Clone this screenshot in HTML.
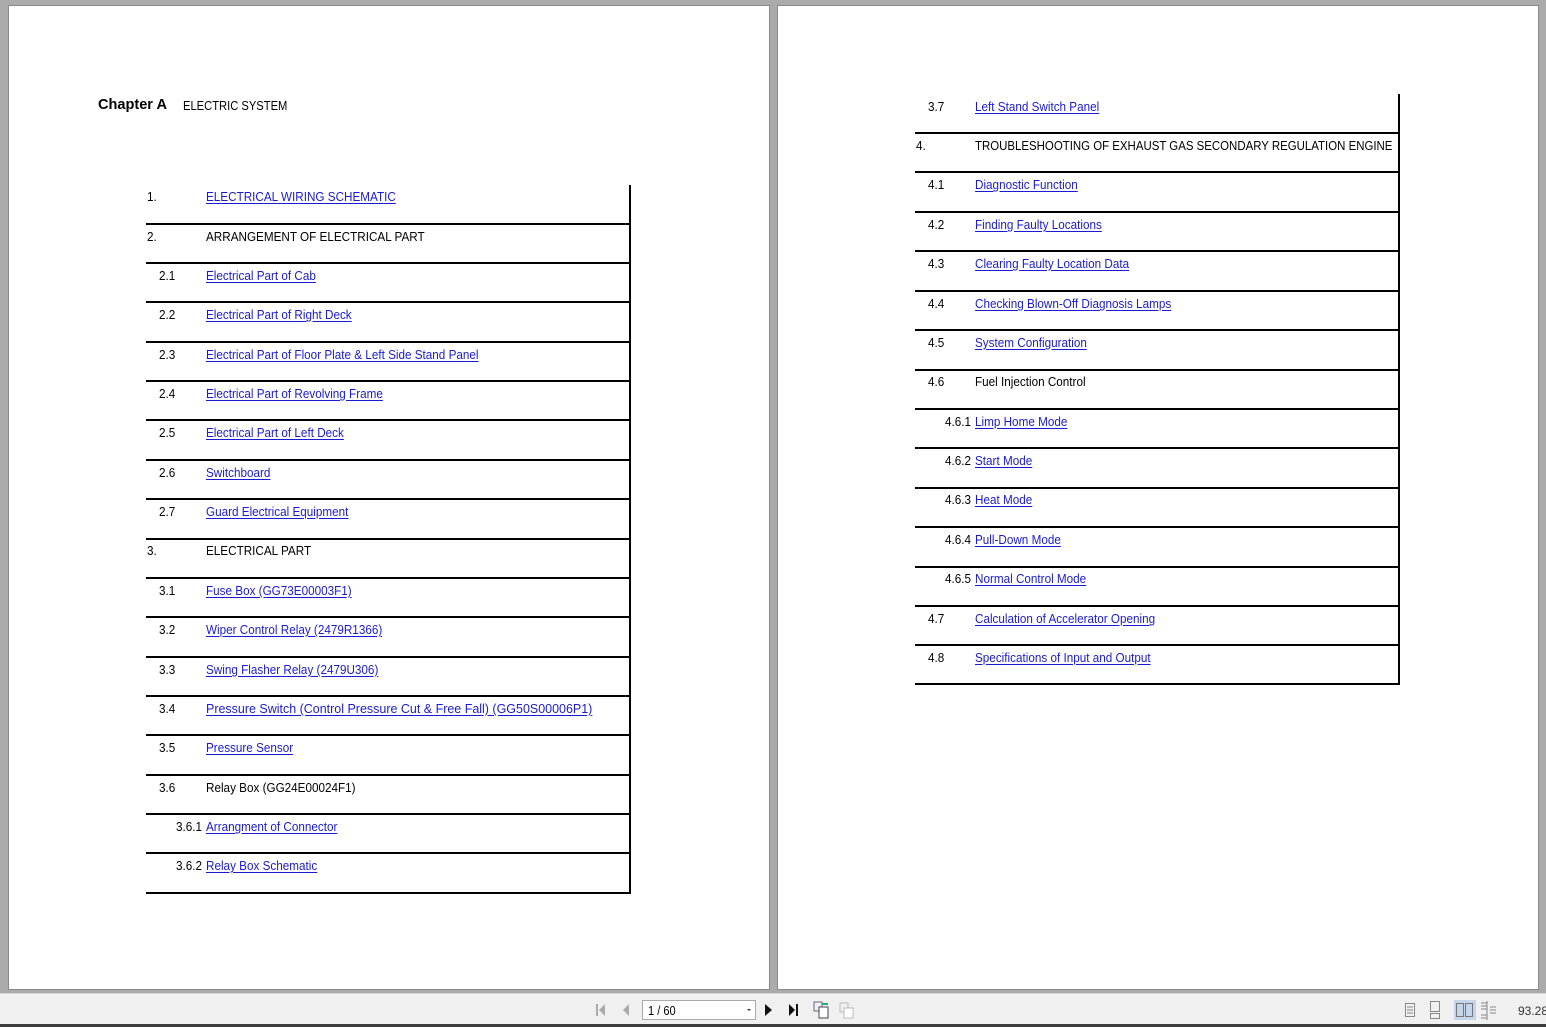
<!DOCTYPE html>
<html><head><meta charset="utf-8"><style>
*{margin:0;padding:0;box-sizing:border-box}
body{width:1546px;height:1027px;background:#ababab;position:relative;overflow:hidden;font-family:"Liberation Sans",sans-serif}
.pg{position:absolute;background:#fff;top:5px;height:985px;border:1px solid #8a8a8a}
.t{position:absolute;font-size:13px;line-height:16px;color:#000;white-space:nowrap;transform:scaleX(.9);transform-origin:0 50%;margin-top:1px}
.a{color:#1a1ad6;text-decoration:underline;text-underline-offset:2px}
.h{position:absolute;height:2px;background:#000}
.v{position:absolute;width:2px;background:#000}
.tb{position:absolute;left:0;top:993px;width:1546px;height:31px;background:#f0f0f0;border-top:1px solid #d8d8d8}
.bot{position:absolute;left:0;top:1024px;width:1546px;height:3px;background:#3c3c3c}
</style></head><body>
<div class="pg" style="left:8px;width:762px"></div>
<div class="pg" style="left:777px;width:762px"></div>

<div class="t" style="left:98px;top:96px;font-weight:bold;font-size:15px;transform:scaleX(.97)">Chapter A</div>
<div class="t" style="left:183px;top:97px;transform:scaleX(.86)">ELECTRIC SYSTEM</div>

<!-- left table -->
<div class="v" style="left:629px;top:185px;height:709px"></div>
<div class="h" style="left:146px;top:223px;width:485px"></div>
<div class="h" style="left:146px;top:262px;width:485px"></div>
<div class="h" style="left:146px;top:301px;width:485px"></div>
<div class="h" style="left:146px;top:341px;width:485px"></div>
<div class="h" style="left:146px;top:380px;width:485px"></div>
<div class="h" style="left:146px;top:419px;width:485px"></div>
<div class="h" style="left:146px;top:459px;width:485px"></div>
<div class="h" style="left:146px;top:498px;width:485px"></div>
<div class="h" style="left:146px;top:538px;width:485px"></div>
<div class="h" style="left:146px;top:577px;width:485px"></div>
<div class="h" style="left:146px;top:616px;width:485px"></div>
<div class="h" style="left:146px;top:656px;width:485px"></div>
<div class="h" style="left:146px;top:695px;width:485px"></div>
<div class="h" style="left:146px;top:734px;width:485px"></div>
<div class="h" style="left:146px;top:774px;width:485px"></div>
<div class="h" style="left:146px;top:813px;width:485px"></div>
<div class="h" style="left:146px;top:852px;width:485px"></div>
<div class="h" style="left:146px;top:892px;width:485px"></div>

<div class="t" style="left:147px;top:188px">1.</div><div class="t a" style="left:206px;top:188px">ELECTRICAL WIRING SCHEMATIC</div>
<div class="t" style="left:147px;top:228px">2.</div><div class="t" style="left:206px;top:228px">ARRANGEMENT OF ELECTRICAL PART</div>
<div class="t" style="left:159px;top:267px">2.1</div><div class="t a" style="left:206px;top:267px">Electrical Part of Cab</div>
<div class="t" style="left:159px;top:306px">2.2</div><div class="t a" style="left:206px;top:306px">Electrical Part of Right Deck</div>
<div class="t" style="left:159px;top:346px">2.3</div><div class="t a" style="left:206px;top:346px">Electrical Part of Floor Plate &amp; Left Side Stand Panel</div>
<div class="t" style="left:159px;top:385px">2.4</div><div class="t a" style="left:206px;top:385px">Electrical Part of Revolving Frame</div>
<div class="t" style="left:159px;top:424px">2.5</div><div class="t a" style="left:206px;top:424px">Electrical Part of Left Deck</div>
<div class="t" style="left:159px;top:464px">2.6</div><div class="t a" style="left:206px;top:464px">Switchboard</div>
<div class="t" style="left:159px;top:503px">2.7</div><div class="t a" style="left:206px;top:503px">Guard Electrical Equipment</div>
<div class="t" style="left:147px;top:542px">3.</div><div class="t" style="left:206px;top:542px">ELECTRICAL PART</div>
<div class="t" style="left:159px;top:582px">3.1</div><div class="t a" style="left:206px;top:582px">Fuse Box (GG73E00003F1)</div>
<div class="t" style="left:159px;top:621px">3.2</div><div class="t a" style="left:206px;top:621px">Wiper Control Relay (2479R1366)</div>
<div class="t" style="left:159px;top:661px">3.3</div><div class="t a" style="left:206px;top:661px">Swing Flasher Relay (2479U306)</div>
<div class="t" style="left:159px;top:700px">3.4</div><div class="t a" style="left:206px;top:700px;transform:scaleX(.96)">Pressure Switch (Control Pressure Cut &amp; Free Fall) (GG50S00006P1)</div>
<div class="t" style="left:159px;top:739px">3.5</div><div class="t a" style="left:206px;top:739px">Pressure Sensor</div>
<div class="t" style="left:159px;top:779px">3.6</div><div class="t" style="left:206px;top:779px">Relay Box (GG24E00024F1)</div>
<div class="t" style="left:176px;top:818px">3.6.1</div><div class="t a" style="left:206px;top:818px">Arrangment of Connector</div>
<div class="t" style="left:176px;top:857px">3.6.2</div><div class="t a" style="left:206px;top:857px">Relay Box Schematic</div>

<!-- right table -->
<div class="v" style="left:1398px;top:94px;height:591px"></div>
<div class="h" style="left:915px;top:132px;width:485px"></div>
<div class="h" style="left:915px;top:171px;width:485px"></div>
<div class="h" style="left:915px;top:211px;width:485px"></div>
<div class="h" style="left:915px;top:250px;width:485px"></div>
<div class="h" style="left:915px;top:290px;width:485px"></div>
<div class="h" style="left:915px;top:329px;width:485px"></div>
<div class="h" style="left:915px;top:369px;width:485px"></div>
<div class="h" style="left:915px;top:408px;width:485px"></div>
<div class="h" style="left:915px;top:447px;width:485px"></div>
<div class="h" style="left:915px;top:487px;width:485px"></div>
<div class="h" style="left:915px;top:526px;width:485px"></div>
<div class="h" style="left:915px;top:566px;width:485px"></div>
<div class="h" style="left:915px;top:605px;width:485px"></div>
<div class="h" style="left:915px;top:644px;width:485px"></div>
<div class="h" style="left:915px;top:683px;width:485px"></div>

<div class="t" style="left:928px;top:98px">3.7</div><div class="t a" style="left:975px;top:98px">Left Stand Switch Panel</div>
<div class="t" style="left:916px;top:137px">4.</div><div class="t" style="left:975px;top:137px;transform:scaleX(.88)">TROUBLESHOOTING OF EXHAUST GAS SECONDARY REGULATION ENGINE</div>
<div class="t" style="left:928px;top:176px">4.1</div><div class="t a" style="left:975px;top:176px">Diagnostic Function</div>
<div class="t" style="left:928px;top:216px">4.2</div><div class="t a" style="left:975px;top:216px">Finding Faulty Locations</div>
<div class="t" style="left:928px;top:255px">4.3</div><div class="t a" style="left:975px;top:255px">Clearing Faulty Location Data</div>
<div class="t" style="left:928px;top:295px">4.4</div><div class="t a" style="left:975px;top:295px">Checking Blown-Off Diagnosis Lamps</div>
<div class="t" style="left:928px;top:334px">4.5</div><div class="t a" style="left:975px;top:334px">System Configuration</div>
<div class="t" style="left:928px;top:373px">4.6</div><div class="t" style="left:975px;top:373px">Fuel Injection Control</div>
<div class="t" style="left:945px;top:413px">4.6.1</div><div class="t a" style="left:975px;top:413px">Limp Home Mode</div>
<div class="t" style="left:945px;top:452px">4.6.2</div><div class="t a" style="left:975px;top:452px">Start Mode</div>
<div class="t" style="left:945px;top:491px">4.6.3</div><div class="t a" style="left:975px;top:491px">Heat Mode</div>
<div class="t" style="left:945px;top:531px">4.6.4</div><div class="t a" style="left:975px;top:531px">Pull-Down Mode</div>
<div class="t" style="left:945px;top:570px">4.6.5</div><div class="t a" style="left:975px;top:570px">Normal Control Mode</div>
<div class="t" style="left:928px;top:610px">4.7</div><div class="t a" style="left:975px;top:610px">Calculation of Accelerator Opening</div>
<div class="t" style="left:928px;top:649px">4.8</div><div class="t a" style="left:975px;top:649px">Specifications of Input and Output</div>

<!-- toolbar -->
<div class="tb"></div>
<div class="bot"></div>
<svg style="position:absolute;left:590px;top:996px" width="280" height="28">
<rect x="6" y="8" width="2" height="12" fill="#aaa"/><path d="M15 8 L9 14 L15 20Z" fill="#aaa"/>
<path d="M39 8 L33 14 L39 20Z" fill="#aaa"/>
<rect x="52.5" y="4.5" width="113" height="19" fill="#fff" stroke="#aaa"/>
<path d="M157 13 h4 l-2 2z" fill="#333"/>
<path d="M175 8 L182 14 L175 20Z" fill="#111"/>
<path d="M199 8 L205 14 L199 20Z" fill="#111"/><rect x="206" y="8" width="2" height="12" fill="#111"/>
<rect x="224" y="6" width="8" height="9" fill="none" stroke="#667"/><rect x="229" y="11" width="9" height="11" fill="#fff" stroke="#445"/><path d="M232 8 h6" stroke="#2a8" stroke-width="2"/>
<rect x="250" y="7" width="8" height="9" fill="none" stroke="#bbb"/><rect x="254" y="12" width="9" height="10" fill="#fff" stroke="#bbb"/>
</svg>
<div class="t" style="left:648px;top:1002px;font-size:13px;transform:scaleX(.85)">1 / 60</div>
<svg style="position:absolute;left:1400px;top:998px" width="100" height="24">
<rect x="5.5" y="5.5" width="9" height="13" fill="none" stroke="#888"/><path d="M7 9h6M7 12h6M7 15h6" stroke="#888"/>
<rect x="30.5" y="3.5" width="9" height="10" fill="none" stroke="#888"/><rect x="30.5" y="15.5" width="9" height="5" fill="none" stroke="#888"/>
<rect x="54" y="2" width="22" height="20" fill="#c5d5ea"/>
<rect x="56.5" y="5.5" width="7" height="13" fill="none" stroke="#777"/><rect x="65.5" y="5.5" width="7" height="13" fill="none" stroke="#777"/>
<path d="M81 5h6M81 8h6M81 11h6M90 9h6M90 12h6M90 15h6M81 17h6M81 20h6M87 3v19" stroke="#888"/>
</svg>
<div class="t" style="left:1518px;top:1002px;font-size:12px;transform:none;color:#333">93.28</div>
</body></html>
